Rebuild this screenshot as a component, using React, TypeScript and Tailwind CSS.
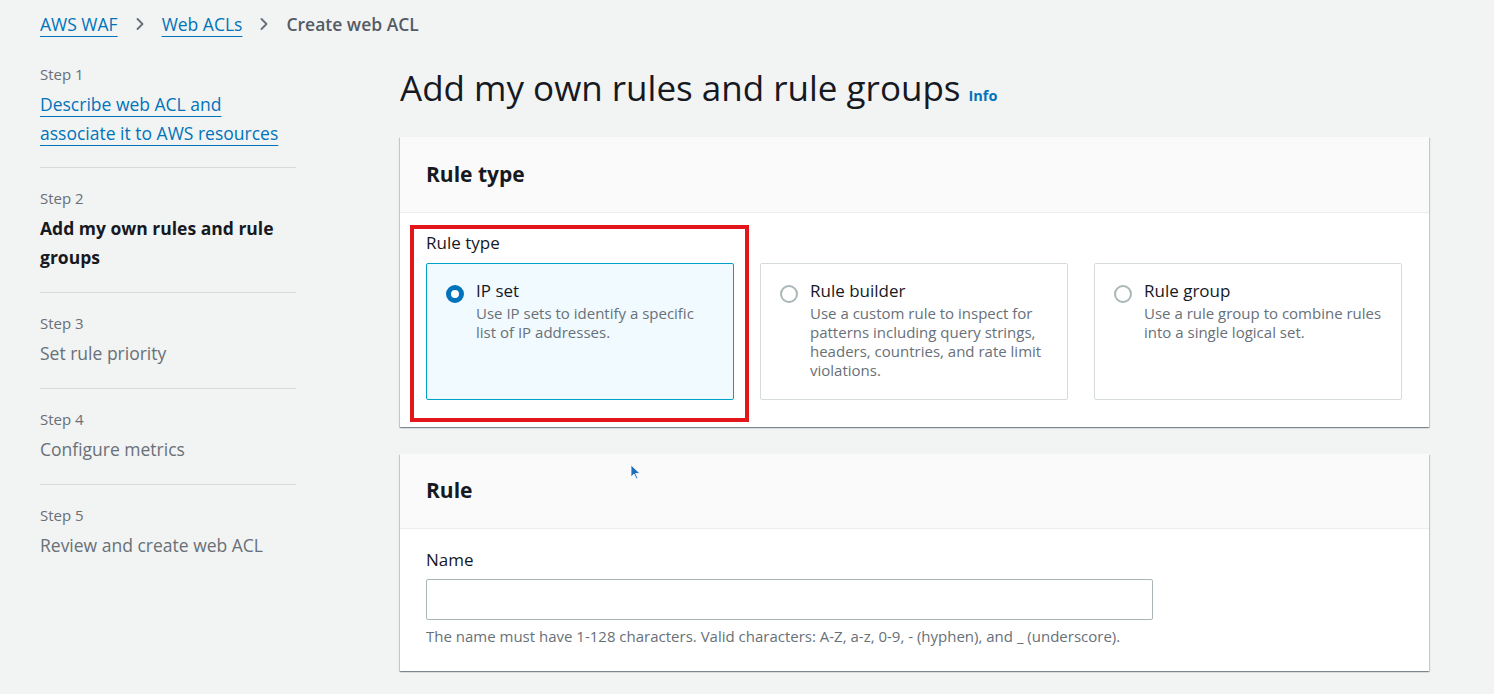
import { ChevronRight } from 'lucide-react';

const steps = [
  { label: 'Step 1', title: 'Describe web ACL and associate it to AWS resources', state: 'link' },
  { label: 'Step 2', title: 'Add my own rules and rule groups', state: 'active' },
  { label: 'Step 3', title: 'Set rule priority', state: 'idle' },
  { label: 'Step 4', title: 'Configure metrics', state: 'idle' },
  { label: 'Step 5', title: 'Review and create web ACL', state: 'idle' },
];

const ruleTypes = [
  { title: 'IP set', desc: 'Use IP sets to identify a specific list of IP addresses.', selected: true },
  {
    title: 'Rule builder',
    desc: 'Use a custom rule to inspect for patterns including query strings, headers, countries, and rate limit violations.',
    selected: false,
  },
  { title: 'Rule group', desc: 'Use a rule group to combine rules into a single logical set.', selected: false },
];

const cardShadow =
  'shadow-[0_1px_1px_0_rgba(0,28,36,0.3),1px_1px_1px_0_rgba(0,28,36,0.15),-1px_1px_1px_0_rgba(0,28,36,0.15)]';

function Radio({ checked }: { checked: boolean }) {
  if (checked) {
    return <span className="mt-[5px] block h-[18px] w-[18px] shrink-0 rounded-full border-[5px] border-[#0073bb] bg-white" />;
  }
  return <span className="mt-[5px] block h-[18px] w-[18px] shrink-0 rounded-full border-2 border-[#aab7b8] bg-white" />;
}

export default function App() {
  return (
    <div className="relative min-h-[694px] w-full bg-[#f2f3f3] font-['Open_Sans',sans-serif] text-[#16191f]">
      {/* Breadcrumbs */}
      <nav className="flex items-center gap-[12px] pl-[40px] pt-[10px] text-[17.5px] leading-[28px]">
        <a className="text-[#0073bb] underline decoration-1 underline-offset-[5px]">AWS WAF</a>
        <ChevronRight className="h-[20px] w-[20px] text-[#687078]" strokeWidth={2.25} />
        <a className="text-[#0073bb] underline decoration-1 underline-offset-[5px]">Web ACLs</a>
        <ChevronRight className="h-[20px] w-[20px] text-[#687078]" strokeWidth={2.25} />
        <span className="font-semibold text-[#545b64]">Create web ACL</span>
      </nav>

      <div className="flex pt-[24px]">
        {/* Wizard steps */}
        <aside className="ml-[40px] w-[256px] shrink-0">
          {steps.map((s, i) => (
            <div key={s.label} className={i > 0 ? 'border-t border-[#d5dbdb] pt-[18px] pb-[20px]' : 'pb-[19px]'}>
              <div className="text-[15px] leading-[24px] text-[#687078]">{s.label}</div>
              <div
                className={
                  s.state === 'link'
                    ? 'mt-[4px] text-[17.5px] leading-[29px] text-[#0073bb]'
                    : s.state === 'active'
                      ? 'mt-[4px] text-[17.5px] font-bold leading-[29px] text-[#16191f]'
                      : 'mt-[4px] text-[17.5px] leading-[29px] text-[#687078]'
                }
              >
                {s.state === 'link' ? (
                  <span className="underline decoration-1 underline-offset-[5px]">
                    Describe web ACL and
                    <br />
                    associate it to AWS resources
                  </span>
                ) : (
                  s.title
                )}
              </div>
            </div>
          ))}
        </aside>

        {/* Main content */}
        <main className="ml-[104px] w-[1029px] pt-[3px]">
          <div className="flex items-baseline gap-[8px]">
            <h1 className="text-[35px] font-normal leading-[46px] text-[#16191f]">Add my own rules and rule groups</h1>
            <a className="text-[14.5px] font-bold text-[#0073bb]">Info</a>
          </div>

          {/* Rule type card */}
          <section className={`mt-[26px] bg-white ${cardShadow}`}>
            <div className="flex h-[76px] items-center border-b border-[#eaeded] bg-[#fafafa] px-[26px]">
              <h2 className="text-[21px] font-bold text-[#16191f]">Rule type</h2>
            </div>
            <div className="px-[26px] pb-[27px] pt-[18px]">
              <div className="text-[17px] leading-[24px] text-[#16191f]">Rule type</div>
              <div className="mt-[8px] grid w-[976px] grid-cols-3 gap-[26px]">
                {ruleTypes.map((r) => (
                  <div
                    key={r.title}
                    className={
                      r.selected
                        ? 'flex h-[137px] gap-[12px] rounded-[2px] border border-[#00a1c9] bg-[#f1faff] px-[19px] pt-[16px]'
                        : 'flex h-[137px] gap-[12px] rounded-[2px] border border-[#d5dbdb] bg-white px-[19px] pt-[16px]'
                    }
                  >
                    <Radio checked={r.selected} />
                    <div>
                      <div className="text-[17px] leading-[22px] text-[#16191f]">{r.title}</div>
                      <div className="mt-[2px] text-[15px] leading-[19px] text-[#687078]">{r.desc}</div>
                    </div>
                  </div>
                ))}
              </div>
            </div>
          </section>

          {/* Rule card */}
          <section className={`mt-[27px] bg-white ${cardShadow}`}>
            <div className="flex h-[75px] items-center border-b border-[#eaeded] bg-[#fafafa] px-[26px]">
              <h2 className="text-[21px] font-bold text-[#16191f]">Rule</h2>
            </div>
            <div className="px-[26px] pb-[25px] pt-[19px]">
              <div className="text-[17px] leading-[24px] text-[#16191f]">Name</div>
              <input
                className="mt-[7px] block h-[41px] w-[727px] rounded-[2px] border border-[#aab7b8] bg-white px-3 outline-none"
                type="text"
              />
              <div className="mt-[6px] text-[15px] leading-[20px] text-[#687078]">
                The name must have 1-128 characters. Valid characters: A-Z, a-z, 0-9, - (hyphen), and _ (underscore).
              </div>
            </div>
          </section>
        </main>
      </div>

      {/* Screenshot annotation */}
      <div className="pointer-events-none absolute left-[410px] top-[225px] h-[197px] w-[339px] border-[4px] border-[#e3161c]" />

      {/* Mouse cursor */}
      <svg className="absolute left-[630px] top-[464px]" width="11" height="16" viewBox="0 0 11 16">
        <path d="M1 1 L1 13 L4 10 L6.5 15 L8 14.3 L5.6 9.5 L10 9.5 Z" fill="#1f6fb8" stroke="#ffffff" strokeWidth="0.8" />
      </svg>
    </div>
  );
}
